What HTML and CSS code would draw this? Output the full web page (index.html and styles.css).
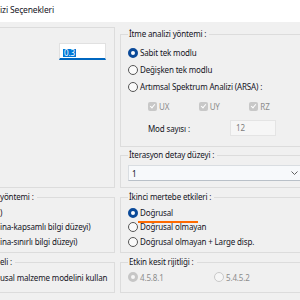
FILE: index.html
```html
<!DOCTYPE html>
<html lang="tr">
<head>
  <meta charset="UTF-8" />
  <title>Analizi Seçenekleri</title>
  <link rel="stylesheet" href="styles.css">
</head>
<body>
  <div class="titlebar">izi Seçenekleri</div>

  <div class="dialog">
    <!-- left column, cut off by the window edge -->
    <fieldset class="group group-left group-top">
      <div class="field-row">
        <div class="textbox focused"><span class="selection">0.3</span></div>
      </div>
    </fieldset>

    <div class="stack">
      <fieldset class="group group-right group-push">
        <legend>İtme analizi yöntemi :</legend>
        <label class="option"><input type="radio" name="push" checked> Sabit tek modlu</label>
        <label class="option"><input type="radio" name="push"> Değişken tek modlu</label>
        <label class="option"><input type="radio" name="push"> Artımsal Spektrum Analizi (ARSA) :</label>
        <div class="checks">
          <label class="check disabled"><input type="checkbox" checked disabled> UX</label>
          <label class="check disabled"><input type="checkbox" checked disabled> UY</label>
          <label class="check disabled"><input type="checkbox" checked disabled> RZ</label>
        </div>
        <div class="mode-row">
          <span>Mod sayısı :</span>
          <div class="textbox disabled-box">12</div>
        </div>
      </fieldset>

      <fieldset class="group group-right group-iter">
        <legend>İterasyon detay düzeyi :</legend>
        <div class="combo">
          <span>1</span>
          <svg class="chevron" width="7" height="4" viewBox="0 0 7 4"><polyline points="0.5,0.5 3.5,3.5 6.5,0.5" fill="none" stroke="#606060" stroke-width="1"/></svg>
        </div>
      </fieldset>
    </div>

    <fieldset class="group group-left">
      <legend>yöntemi :</legend>
      <div class="line">)</div>
      <div class="line">ina-kapsamlı bilgi düzeyi)</div>
      <div class="line">ina-sınırlı bilgi düzeyi)</div>
    </fieldset>

    <fieldset class="group group-right group-second">
      <legend>İkinci mertebe etkileri :</legend>
      <label class="option"><input type="radio" name="second" checked> <span class="marked">Doğrusal</span></label>
      <label class="option"><input type="radio" name="second"> Doğrusal olmayan</label>
      <label class="option"><input type="radio" name="second"> Doğrusal olmayan + Large disp.</label>
    </fieldset>

    <fieldset class="group group-left">
      <legend>eli :</legend>
      <div class="line">usal malzeme modelini kullan</div>
    </fieldset>

    <fieldset class="group group-right group-stiff">
      <legend>Etkin kesit rijitliği :</legend>
      <div class="stiff-row">
        <label class="option disabled"><input type="radio" name="stiff" checked disabled> 4.5.8.1</label>
        <label class="option disabled"><input type="radio" name="stiff" disabled> 5.4.5.2</label>
      </div>
    </fieldset>
  </div>
</body>
</html>
```

FILE: styles.css
```css
body {
  margin: 0;
  width: 300px;
  height: 300px;
  overflow: hidden;
  background-color: #f0f0f0;
  color: #14141e;
  font-family: "Noto Sans", "DejaVu Sans", sans-serif;
  font-size: 8px;
  letter-spacing: -0.15px;
}

.titlebar {
  height: 22px;
  line-height: 20px;
  background-color: #fff;
  font-size: 8.5px;
}

.dialog {
  display: grid;
  grid-template-columns: 115px 180px;
  grid-template-rows: 161px 61px 36px;
  column-gap: 5px;
  row-gap: 4px;
  padding-top: 5px;
}

.group {
  margin: 0;
  padding: 0 0 0 7px;
  min-width: 0;
  border: 1px solid #dcdcdc;
  box-sizing: border-box;
}

.group legend {
  padding: 0 3px 0 1px;
  line-height: 10px;
  height: 10px;
}

/* both columns are cut by the screenshot edges */
.group-left {
  border-left: none;
  padding-left: 0;
}

.group-left legend {
  padding-left: 0;
}

.group-right {
  border-right: none;
}

.group-top {
  padding-right: 8px;
}

.field-row {
  display: flex;
  justify-content: flex-end;
  margin-top: 15px;
}

.textbox {
  box-sizing: border-box;
  background: #fff;
  border: 1px solid #e1e1e1;
}

.textbox.focused {
  width: 47px;
  height: 17px;
  padding: 3px 0 0 3px;
  border-bottom: 2px solid #0067c0;
}

.selection {
  display: inline-block;
  background: #0078d7;
  color: #fff;
  line-height: 8px;
  padding: 0 1px;
}

.stack {
  display: flex;
  flex-direction: column;
  gap: 3px;
  padding-top: 2px;
}

.group-push {
  height: 118px;
  padding-top: 5px;
}

.option {
  display: flex;
  align-items: center;
  gap: 2px;
  height: 17px;
}

input[type="radio"] {
  appearance: none;
  margin: 0;
  width: 10px;
  height: 10px;
  box-sizing: border-box;
  border-radius: 50%;
  border: 1px solid #555;
  background: #fafafa;
}

input[type="radio"]:checked {
  border: 3px solid #0b4a99;
  background: #fff;
}

input[type="radio"]:disabled {
  border-color: #c9c9c9;
  background: #f6f6f6;
}

input[type="radio"]:checked:disabled {
  border: 3px solid #c6c6c6;
}

.checks {
  display: flex;
  margin: 3px 0 0 20px;
  height: 17px;
  align-items: center;
}

.check {
  display: flex;
  align-items: center;
  gap: 2px;
  width: 51px;
}

input[type="checkbox"] {
  appearance: none;
  margin: 0;
  width: 9px;
  height: 9px;
  border-radius: 2px;
  background: #c8c8c8;
  position: relative;
}

input[type="checkbox"]:checked::after {
  content: "";
  position: absolute;
  left: 3px;
  top: 1px;
  width: 2px;
  height: 4px;
  border: solid #fff;
  border-width: 0 1px 1px 0;
  transform: rotate(40deg);
}

.disabled {
  color: #8c8c8c;
}

.mode-row {
  display: flex;
  align-items: center;
  margin: 5px 0 0 20px;
}

.mode-row span {
  width: 82px;
}

.disabled-box {
  width: 46px;
  height: 16px;
  line-height: 14px;
  padding-left: 5px;
  background: #f6f6f6;
  border-color: #e4e4e4;
  color: #7d7d7d;
}

.group-iter {
  height: 38px;
}

.combo {
  display: flex;
  align-items: center;
  justify-content: space-between;
  box-sizing: border-box;
  height: 16px;
  margin: 5px 0 0 0;
  padding: 0 2px 0 3px;
  background: #f7f9fb;
  border: 1px solid #d9dde1;
  border-right: none;
  border-bottom-color: #b9c0c8;
}

.group-left .line,
.group-second .option {
  height: 14.5px;
  line-height: 14.5px;
}

.group-left .line:first-of-type,
.group-second .option:first-of-type {
  margin-top: 3.5px;
}

.marked {
  position: relative;
}

.marked::after {
  content: "";
  position: absolute;
  left: -2px;
  width: 60px;
  bottom: -3px;
  height: 2px;
  background: #ff6a00;
}

.stiff-row {
  display: flex;
  margin-top: 3px;
}

.stiff-row .option {
  width: 99px;
  height: 14px;
}
```
